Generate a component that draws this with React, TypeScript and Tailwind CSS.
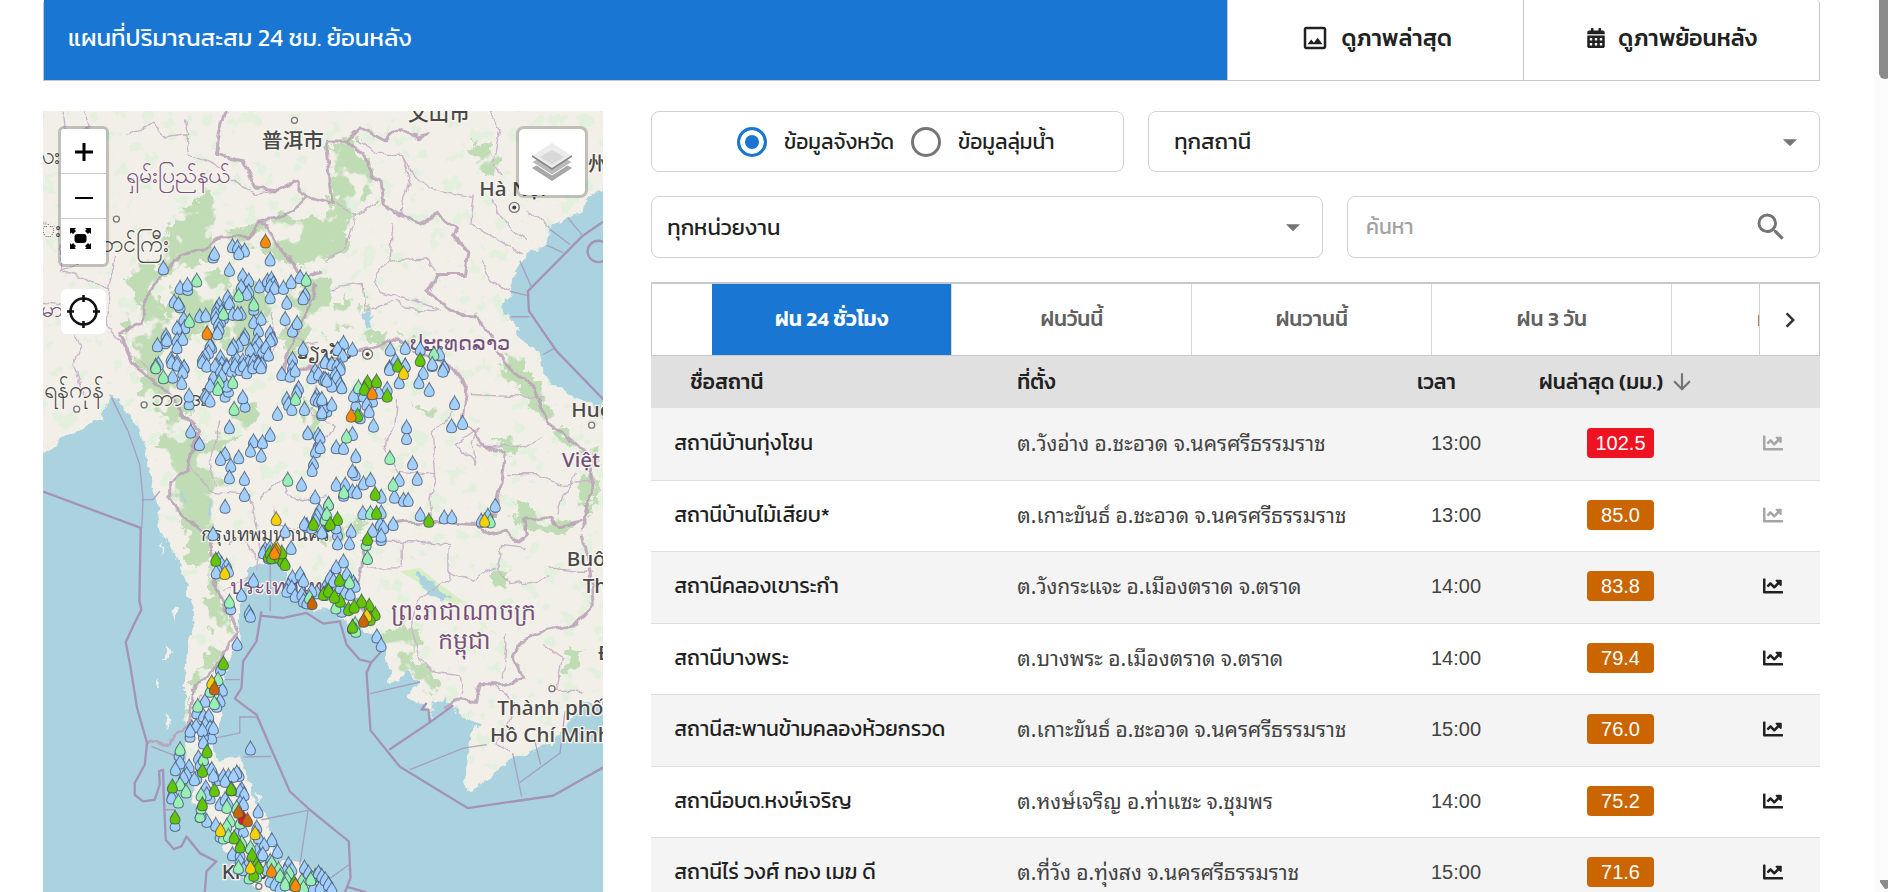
import React, { useState } from 'react';
import { FaCalendarAlt, FaChartLine } from 'react-icons/fa';
import { MdArrowDownward, MdArrowDropDown, MdKeyboardArrowRight, MdOutlineImage, MdSearch } from 'react-icons/md';

interface Station {
  name: string;
  location: string;
  time: string;
  rain: string;
  level: 'red' | 'brown';
  hasChart: boolean;
}

const stations: Station[] = [
  { name: 'สถานีบ้านทุ่งโชน', location: 'ต.วังอ่าง อ.ชะอวด จ.นครศรีธรรมราช', time: '13:00', rain: '102.5', level: 'red', hasChart: false },
  { name: 'สถานีบ้านไม้เสียบ*', location: 'ต.เกาะขันธ์ อ.ชะอวด จ.นครศรีธรรมราช', time: '13:00', rain: '85.0', level: 'brown', hasChart: false },
  { name: 'สถานีคลองเขาระกำ', location: 'ต.วังกระแจะ อ.เมืองตราด จ.ตราด', time: '14:00', rain: '83.8', level: 'brown', hasChart: true },
  { name: 'สถานีบางพระ', location: 'ต.บางพระ อ.เมืองตราด จ.ตราด', time: '14:00', rain: '79.4', level: 'brown', hasChart: true },
  { name: 'สถานีสะพานข้ามคลองห้วยกรวด', location: 'ต.เกาะขันธ์ อ.ชะอวด จ.นครศรีธรรมราช', time: '15:00', rain: '76.0', level: 'brown', hasChart: true },
  { name: 'สถานีอบต.หงษ์เจริญ', location: 'ต.หงษ์เจริญ อ.ท่าแซะ จ.ชุมพร', time: '14:00', rain: '75.2', level: 'brown', hasChart: true },
  { name: 'สถานีไร่ วงศ์ ทอง เมฆ ดี', location: 'ต.ที่วัง อ.ทุ่งสง จ.นครศรีธรรมราช', time: '15:00', rain: '71.6', level: 'brown', hasChart: true },
];

const tabs = ['ฝน 24 ชั่วโมง', 'ฝนวันนี้', 'ฝนวานนี้', 'ฝน 3 วัน', 'ฝน 7 วัน'];

const levelColors = {
  red: 'bg-[#ef1220]',
  brown: 'bg-[#ca6500]',
};

// Rain gauges per map tile, "x,y" pairs grouped by marker colour
interface Tile {
  x: number;
  y: number;
  drops: [string, string][];
}

const BLUE = '#a3cfff';
const MINT = '#9af0b4';
const GREEN = '#63c600';
const YELLOW = '#f7d100';
const ORANGE = '#ff8a00';
const BROWN = '#ca6500';
const RED = '#ef1220';

const tiles: Tile[] = [
  {
    x: -9,
    y: -33,
    drops: [
      [BLUE, '577,437 592,440 613,450 596,458 519,468 523,460 370,503 568,508 690,477 420,562 443,565 442,553 402,603 420,617 415,610 431,655 434,680 479,647 497,645 411,682 378,705 375,725 380,718 352,734 411,718 428,715 411,740 608,525 626,540 603,558 626,572 620,580 658,558 682,540 694,535 700,548 690,557 703,562 690,590 730,562 753,545 780,530 795,582 789,593 740,607 735,655 757,690 771,667'],
      [BLUE, '563,590 568,608 537,612 530,625 545,632 527,640 550,650 528,655 541,662 535,670 537,685 532,698 578,640 603,640 593,640 641,625 641,665 663,655 655,690 690,697 697,715 690,720 614,705 611,715 595,735 580,735 575,745 650,720 657,730 645,745 630,748 665,755 677,740 685,762 515,740 510,735 505,755 495,765 487,775 541,770 545,790 530,795 560,795 575,790 590,775 608,780 625,785 640,780 655,785 665,790 393,775 411,783 355,790 432,800 789,745 757,775 857,783'],
      [MINT, '470,540 448,662 596,585 550,640 641,612 798,538 347,795'],
      [ORANGE, '676,423 501,698'],
    ],
  },
  {
    x: 831,
    y: -33,
    drops: [
      [BLUE, '70,727 97,747 52,745 68,765 15,783 35,790 60,795 210,747 255,742 300,745 358,760 226,780 208,800 255,795 336,793 372,800'],
      [MINT, '341,760'],
      [GREEN, '300,778'],
    ],
  },
  {
    x: -9,
    y: 747,
    drops: [
      [BLUE, '395,5 411,12 432,20 428,35 398,48 425,67 487,5 500,15 520,50 510,75 495,105 500,110 510,120 525,15 541,30 560,20 575,30 585,15 600,25 610,15 620,35 638,20 655,10 663,20 447,128 447,105 615,135 608,110 555,105 565,90 560,75 545,45 725,40 757,20 750,45 765,30 775,82 770,95 740,115 745,130 755,145 712,160 793,145 825,30 815,50 835,40 850,55 865,60 857,5 830,105 825,115 835,120 850,130 860,150 845,160'],
      [BLUE, '452,213 478,250 568,200 690,223 640,242 631,270 667,245 663,285 555,280 541,295 596,290 572,315 568,350 613,355 613,403 555,438 803,218 834,222 834,252 826,272 820,308 816,328 784,372 825,410 519,520 735,512 753,562 837,450 830,465 825,480 800,495 793,490 815,500 847,515 640,660 604,703 627,755 631,765 535,595 545,610 535,630 560,615 565,630 528,635 572,742 675,565 670,575 685,590 690,560 700,575 757,650 780,640 790,660 745,675 740,690 755,680 765,705 785,700 790,720 800,725 830,695 815,690 860,670'],
      [MINT, '347,20 370,50 537,65 533,85 578,65 582,145 766,115 743,357 865,430 855,470 568,723 808,710'],
      [GREEN, '820,490 527,597 685,585 690,575 695,590 718,590 728,600 735,610 725,575 860,690 868,490'],
      [YELLOW, '708,475 554,637 708,560'],
      [ORANGE, '707,570 703,577'],
      [BROWN, '816,727'],
    ],
  },
  {
    x: 831,
    y: 747,
    drops: [
      [BLUE, '15,5 35,10 50,15 60,25 45,40 15,55 50,50 60,70 35,75 65,80 20,60 5,120 10,140 35,132 5,155 5,115 208,25 255,15 237,65 309,37 296,65 336,10 372,20 368,30 327,88 403,128 394,197 427,187 201,85 107,132 110,105 130,105 157,120 175,95 140,130 147,152 120,170 100,105 160,195 259,232 259,200 97,220 48,260 70,262 0,230 0,260 107,287 105,340 97,332'],
      [BLUE, '48,372 75,372 70,402 97,392 110,395 130,368 151,358 237,358 277,308 291,355 223,408 183,408 250,418 264,418 300,462 372,470 395,470 219,490 128,457 183,455 525,435 483,480 503,465 180,490 190,500 157,510 183,535 183,525 93,512 52,520 52,548 88,548 5,515 48,500 70,602 48,620 30,650 80,640 40,660 60,680 100,665 105,675 75,695 15,700 90,700 70,740 65,750'],
      [MINT, '115,80 79,228 209,292 71,395 219,372 25,430 15,475 20,460 151,457 138,550 142,592 88,665 47,740 510,482 105,790'],
      [GREEN, '232,15 142,65 133,85 169,62 201,105 112,165 165,400 169,457 52,475 30,490 326,480 142,535 58,658 10,700 25,690 60,720 43,708 147,735 124,722 85,745 102,738 165,760 150,775 97,800'],
      [YELLOW, '250,37 493,480 140,765'],
      [ORANGE, '156,98 93,165'],
      [BROWN, '130,780'],
    ],
  },
  {
    x: -9,
    y: 1527,
    drops: [
      [BLUE, '591,70 541,145 547,207 495,240 540,240 530,255 470,275 490,285 506,285 495,310 455,320 450,345 468,315 450,330 510,320 515,350 520,322 490,345 487,328 490,365 417,400 420,425 406,445 447,437 440,460 430,470 475,410 480,430 470,470 463,475 500,440 515,445 530,475 520,465 550,465 565,465 555,480 597,462 590,455 580,465 605,505 600,510 612,520 398,520 395,530 497,500 510,530 500,520 540,550 555,535 565,550 600,545 610,550 654,572 631,383'],
      [BLUE, '405,612 500,600 527,612 480,585 540,645 590,640 610,630 650,620 655,650 695,658 672,672 712,693 577,700 600,700 650,690 660,705 668,700 640,720 600,720 620,735 610,745 690,720 680,745 690,780 705,790 745,730 735,750 755,745 793,740 805,755 838,760 850,780 855,800 820,800 865,790 840,800 760,790 720,800'],
      [MINT, '510,210 534,175 523,247 473,255 420,385 420,490 438,512 415,542 490,415 483,580 480,585 483,560 483,522 590,560 560,558 570,600 560,615 550,650 565,645 600,605 605,665 631,680 595,740 627,770 650,765 695,725 715,745 720,765 747,755 740,775 735,790 785,780 825,765 815,770 812,775 790,800 575,505'],
      [GREEN, '550,128 501,392 487,450 397,497 523,508 573,505 487,550 405,590 582,650 600,677 636,703 650,730 655,740 641,762 762,785'],
      [YELLOW, '515,185 541,628 645,637 631,740'],
      [RED, '610,592'],
      [BROWN, '523,203 595,573 622,598'],
      [ORANGE, '694,750 766,793'],
    ],
  },
  {
    x: 831,
    y: 1527,
    drops: [
      [BLUE, '170,47 183,73 -5,755 5,765 15,775 25,790 35,805'],
      [MINT, '107,30'],
      [GREEN, '97,18'],
    ],
  },
];

const RainDrops: React.FC = () => (
  <g stroke="#3c5066" strokeWidth="3" strokeOpacity="0.75">
    {tiles.map((tile) => (
      <g key={`${tile.x}-${tile.y}`} transform={`translate(${tile.x} ${tile.y})`}>
        {tile.drops.map(([color, points], i) => (
          <g key={i} fill={color}>
            {points.split(' ').map((p, j) => (
              <path key={j} transform={`translate(${p.replace(',', ' ')})`} d="M0 -21 C4 -11 15 -1 15 8 C15 17 8 21 0 21 C-8 21 -15 17 -15 8 C-15 -1 -4 -11 0 -21Z" />
            ))}
          </g>
        ))}
      </g>
    ))}
  </g>
);

const MapDrawing: React.FC = () => (
  <svg className="block h-full w-full" viewBox="0 0 1680 2343" preserveAspectRatio="xMinYMin slice" role="img" aria-label="แผนที่ฝน">
    <defs>
      <filter id="rough" x="-5%" y="-5%" width="110%" height="110%">
        <feTurbulence type="fractalNoise" baseFrequency="0.03" numOctaves="3" seed="4" result="n" />
        <feDisplacementMap in="SourceGraphic" in2="n" scale="34" xChannelSelector="R" yChannelSelector="G" />
      </filter>
      <filter id="wiggle" x="-5%" y="-5%" width="110%" height="110%">
        <feTurbulence type="fractalNoise" baseFrequency="0.02" numOctaves="3" seed="9" result="n" />
        <feDisplacementMap in="SourceGraphic" in2="n" scale="28" xChannelSelector="R" yChannelSelector="G" />
      </filter>
      {/* ragged edges plus clearings inside the forest */}
      <filter id="forest" x="-5%" y="-5%" width="110%" height="110%">
        <feTurbulence type="fractalNoise" baseFrequency="0.03" numOctaves="4" seed="4" result="n" />
        <feDisplacementMap in="SourceGraphic" in2="n" scale="70" xChannelSelector="R" yChannelSelector="G" result="edge" />
        <feTurbulence type="fractalNoise" baseFrequency="0.012" numOctaves="4" seed="13" />
        <feColorMatrix values="0 0 0 0 0  0 0 0 0 0  0 0 0 0 0  14 0 0 0 -5.6" result="holes" />
        <feComposite in="edge" in2="holes" operator="in" />
      </filter>
      <filter id="specks" x="0" y="0" width="100%" height="100%">
        <feTurbulence type="fractalNoise" baseFrequency="0.02" numOctaves="4" seed="21" />
        <feColorMatrix values="0 0 0 0 0.77  0 0 0 0 0.87  0 0 0 0 0.72  18 0 0 0 -11" />
      </filter>
    </defs>
    <rect width="1680" height="2343" fill="#f2efe9" />
    <rect width="1680" height="2343" filter="url(#specks)" />

    {/* forest */}
    <g fill="#c0dcb5" filter="url(#forest)">
      <path d="M366 367 L420 290 L516 230 L520 350 L560 355 L640 345 L700 315 L860 320 L870 210 L850 120 L880 80 L920 85 L985 170 L1000 230 L950 290 L945 370 L905 330 L910 420 L840 450 L780 460 L690 450 L640 400 L560 400 L500 440 L440 470 L350 500 L335 560 L390 620 L360 700 L330 760 L370 800 L430 880 L470 1000 L560 940 L590 890 L660 870 L640 930 L560 990 L530 1070 L550 1150 L510 1220 L500 1330 L540 1370 L520 1450 L570 1560 L520 1660 L450 1740 L440 1840 L425 1830 L450 1700 L520 1600 L490 1500 L500 1370 L430 1360 L420 1310 L440 1270 L390 1200 L370 1100 L340 1010 L370 950 L300 850 L290 780 L280 720 L230 640 L290 560 L250 510 L290 460 L360 460 Z" />
      <path d="M560 560 L620 500 L680 580 L640 700 L560 720 L480 700Z M720 560 L790 490 L860 500 L850 590 L790 680 L760 760 L720 740Z M400 520 L520 480 L560 520 L520 640 L420 700 L380 600Z M845 320 L910 330 L890 430 L840 460Z M840 520 L870 600 L840 680Z M1390 710 L1450 760 L1500 850 L1540 930 L1600 990 L1660 1010 L1660 1060 L1580 1010 L1500 940 L1440 850 L1370 790Z M1420 1170 L1480 1190 L1540 1220 L1620 1240 L1680 1130 L1640 1090 L1600 1120 L1640 1220 L1560 1270 L1460 1250 L1410 1230Z M1020 1560 L1090 1540 L1140 1590 L1120 1640 L1170 1690 L1170 1760 L1100 1690 L1050 1700 L1040 1650Z M780 870 L830 900 L820 980 L790 960Z M1340 1390 L1390 1380 L1400 1430 L1360 1440Z M1570 1630 L1620 1610 L1610 1680 L1560 1680Z" />
      <path d="M1290 100 L1340 90 L1370 150 L1340 200 L1300 160Z M960 660 L1060 650 L1110 700 L1020 720Z M1250 590 L1310 610 L1270 630Z M910 560 L980 580 L920 650 L850 640Z M1350 980 L1450 1000 L1400 1030Z M1100 870 L1200 900 L1250 960 L1170 920Z M840 1240 L980 1230 L900 1280 L820 1300Z" />
    </g>
    <path d="M1070 1380 L1130 1370 L1190 1420 L1260 1470 L1240 1480 L1160 1450 L1120 1410Z" fill="#d7edc3" />

    {/* sea */}
    <g fill="#aad3df" filter="url(#rough)">
      <path d="M-40 1047 L41 1007 L51 987 L121 952 L151 932 L176 912 L196 877 L206 847 L231 867 L261 917 L291 962 L311 1027 L326 1117 L341 1177 L356 1247 L376 1307 L401 1337 L421 1397 L441 1467 L446 1547 L431 1617 L426 1717 L426 1857 L431 1927 L421 1967 L456 2007 L446 2067 L481 2117 L511 2147 L551 2217 L581 2257 L631 2317 L690 2400 L-40 2400Z" />
      <path d="M611 1387 L631 1362 L691 1357 L726 1367 L731 1407 L741 1447 L781 1487 L861 1500 L891 1517 L921 1547 L981 1567 L1016 1617 L1036 1657 L1041 1712 L1071 1707 L1091 1677 L1121 1707 L1096 1757 L1131 1777 L1211 1767 L1241 1807 L1271 1817 L1306 1837 L1281 1867 L1276 1947 L1261 2027 L1281 2037 L1331 2017 L1361 1977 L1401 1947 L1461 1922 L1471 1902 L1531 1897 L1571 1837 L1621 1777 L1720 1742 L1720 2400 L876 2400 L861 2317 L831 2277 L791 2267 L701 2247 L681 2187 L671 2127 L651 2087 L631 2057 L611 2007 L591 1932 L561 1937 L521 1947 L511 1897 L521 1867 L536 1797 L536 1727 L551 1667 L571 1617 L591 1567 L581 1507Z" />
      <path d="M1720 207 L1631 257 L1621 297 L1571 317 L1521 347 L1511 402 L1471 417 L1431 447 L1411 497 L1401 547 L1383 587 L1401 627 L1431 677 L1481 717 L1496 767 L1521 807 L1571 847 L1621 867 L1720 967Z" />
      <path d="M1120 1390 L1150 1395 L1180 1430 L1220 1460 L1200 1468 L1150 1440Z M960 610 L975 600 L985 650 L970 650Z M415 1130 L425 1130 L430 1180 L420 1180Z M492 1160 L502 1170 L505 1220 L495 1215Z" />
    </g>
    <g fill="#f2efe9" filter="url(#rough)">
      <path d="M350 1310 L358 1300 L355 1330Z M395 1480 L410 1490 L395 1520 L385 1500Z M370 1590 L380 1630 L365 1640Z M375 1800 L385 1830 L370 1850Z M345 1700 L355 1720 L345 1740Z M1150 1780 L1165 1770 L1165 1820Z M638 2040 L655 2050 L650 2070Z" />
    </g>

    {/* province lines */}
    <g fill="none" stroke="#c9b3c9" strokeWidth="4" filter="url(#wiggle)">
      <path d="M60 0 L70 70 L140 50 L120 0 M250 70 L330 40 L370 80 L440 70 L430 20 M430 70 L440 130 L500 150 L560 200 L640 250 L700 240 L750 220 M130 360 L110 460 L60 480 L200 530 L220 440 M200 530 L190 640 L240 700 M0 340 L50 350 L60 480 M0 570 L60 580 L110 700 L90 760 L120 850" />
      <path d="M940 90 L1000 130 L1080 130 L1120 210 L1200 240 L1290 260 M1080 130 L1100 200 L1070 310 M870 270 L940 310 L1010 270 M940 310 L910 400 L850 450 M1050 330 L1040 450 L990 510 L1010 540 L1120 570 L1190 600 M1040 450 L1150 440 L1180 480 M1340 0 L1370 50 L1350 150 L1380 190 M1290 250 L1280 340 L1340 370 L1440 430 M1340 270 L1390 340 L1450 390 M1450 300 L1520 350 M1310 450 L1340 510 L1400 540" />
      <path d="M870 530 L960 520 L970 600 L1060 570 L1080 590 L1180 600 M530 930 L500 1050 L520 1120 M430 1050 L500 1140 L620 1150 L650 1280 L640 1380 M650 1160 L720 1100 L730 1150 L760 1170 L850 1150 M850 980 L870 940 L800 900 L830 800 M1060 860 L1050 960 L1020 1000 L1060 1080 L1180 1090 L1170 960 L1230 900 M1180 1090 L1160 1160 L1170 1240 M1240 1000 L1300 1060 L1280 1000 L1310 950 L1250 990Z M1280 850 L1500 860 M1300 1000 L1440 1010 L1500 980" />
      <path d="M950 1290 L1080 1290 L1080 1370 L970 1370 M1080 1290 L1220 1300 L1220 1400 L1120 1470 L1110 1560 M1220 1380 L1290 1410 L1360 1370 L1380 1300 L1450 1310 M1360 1370 L1400 1420 L1520 1400 M1520 1370 L1600 1380 L1650 1380 M1390 1090 L1480 1090 L1550 1120 L1640 1110 M1540 1210 L1560 1150 L1600 1080 M1110 1560 L1130 1640 L1170 1680 L1250 1690 L1260 1750 M1390 1570 L1380 1700 M1500 1600 L1560 1640 L1540 1740 L1620 1740 M1350 1720 L1420 1780 L1360 1900 L1400 1920" />
      <path d="M440 1800 L480 1750 M540 1440 L610 1400 L640 1410 M560 1300 L600 1280 L640 1340 M290 750 L360 800 M680 600 L700 700 L640 780 M720 640 L780 700 L830 690 M690 1180 L700 1240 L760 1260 L800 1220" />
    </g>

    {/* national borders */}
    <g fill="none" stroke="#b9a0b6" strokeWidth="9" strokeOpacity="0.85" strokeLinejoin="round" filter="url(#wiggle)">
      <path d="M550 0 L530 60 L520 130 L600 150 L640 230 L700 240 L760 210 L790 260 L870 280 L860 200 L850 90 L910 90 L950 50 L1030 90 L1070 50 L1120 80 L1160 70 M910 90 L960 130 L990 200 L1010 210 L1020 280 L1080 320 L1130 340 L1180 310 L1240 350 L1230 380 L1280 420 L1270 490 L1180 490 L1150 540 L1220 600 L1300 620 L1330 660 L1380 750 L1470 830 L1510 930 L1600 1000 L1650 1050 L1640 1150 L1620 1260" />
      <path d="M790 260 L750 300 L700 320 L650 330 L620 380 L540 380 L490 410 L390 450 L350 500 L310 560 L300 640 L230 660 L270 760 L360 830 L420 910 L470 960 L450 1000 L430 1080 L380 1110 L380 1160 L430 1220 L500 1290 L520 1360 L510 1420 L550 1500 L580 1560 L530 1650 L450 1740 L430 1840 L370 1900 L320 1890" />
      <path d="M650 330 L700 400 L740 440 L770 500 L840 480 M820 520 L790 600 L730 740 L720 800 L790 770 L880 730 L1000 710 L1060 680 L1120 720 L1240 770 L1270 840 L1260 930 L1310 990 L1380 1030 L1370 1120 L1350 1220 L1300 1240 L1100 1230 L1000 1250 L960 1300 L960 1370 L930 1450 L980 1530" />
      <path d="M1300 1240 L1340 1270 L1390 1260 L1420 1290 L1450 1270 L1440 1220 L1520 1220 L1550 1250 L1620 1230 M1620 1270 L1640 1380 L1650 1480 L1600 1540 L1500 1560 L1420 1600 L1410 1640 L1440 1700 L1370 1720 L1310 1720 L1300 1770 L1240 1770 L1200 1790" />
    </g>

    {/* maritime lines */}
    <g fill="none" stroke="#a593b5" strokeWidth="7" strokeLinejoin="round">
      <path d="M0 1141 L293 1250 L289 1470 L295 1495 L270 1545 L248 1593 L262 1665 L282 1790 L312 1895 L305 1960 L275 2015 L275 2050 L300 2070 L335 2065 L350 2020 L348 1980 L360 1975 L362 2050 L368 2185 L392 2213 L415 2205 L430 2175 L470 2225 L520 2250 L490 2280 L485 2343" />
      <path d="M655 1500 L640 1590 L600 1650 L595 1730 L575 1762 L640 1810 L670 1880 L740 2040 L800 2095 L861 2145 L917 2190 L922 2300 L905 2343 M915 2327 L970 2343" />
      <path d="M650 1513 L720 1520 L790 1505 L840 1537 L890 1530 L910 1600 L950 1645 L985 1653 L1015 1620 M985 1650 L970 1685 L982 1857 L1069 1965 L1273 2090 L1529 2053 L1680 1968 M1038 1915 L1160 1833 L1155 1795 L1135 1795 L1150 1775 M1160 1833 L1230 1782" />
      <path d="M1680 332 L1617 375 L1454 540 L1457 600 L1540 720 L1680 865" />
      <circle cx="1665" cy="421" r="32" />
    </g>
    <g fill="none" stroke="#a593b5" strokeWidth="4" strokeOpacity="0.8">
      <path d="M206 860 L255 960 L290 1060 L300 1165 L296 1250 M981 1747 L1130 1712 M1100 1975 L1260 1910 L1330 1900 M1408 1925 L1435 2055 M1430 2013 L1550 1925 L1565 1800 M1475 1890 L1492 1960 M1430 450 L1463 525 M1400 540 L1450 553 M1402 617 L1457 617 M1520 355 L1580 400 M1510 402 L1560 425 M1575 322 L1615 370 M1500 730 L1535 710 M515 1880 L590 1865 L590 1817 L640 1817 M600 1937 L685 1935 M655 2125 L795 2097 L770 2260 M545 1705 L590 1705 M325 1905 L400 1935 M365 2095 L395 2095 M862 2300 L917 2260 M296 1165 L330 1165 L350 1140 M681 1357 L681 1500" />
    </g>

    {/* places */}
    <g fill="#f6f4f0" stroke="#777" strokeWidth="4">
      <circle cx="754" cy="28" r="9" />
      <circle cx="220" cy="324" r="9" />
      <circle cx="101" cy="894" r="9" />
      <circle cx="303" cy="881" r="9" />
      <circle cx="973" cy="729" r="15" />
      <circle cx="1413" cy="289" r="15" />
      <circle cx="1645" cy="942" r="9" />
      <circle cx="1526" cy="1732" r="9" />
      <circle cx="647" cy="2325" r="9" />
    </g>
    <g fill="#444">
      <circle cx="973" cy="729" r="6" />
      <circle cx="1413" cy="289" r="6" />
    </g>
    <g fill="#484848" stroke="#f7f4ee" strokeWidth="8" paintOrder="stroke" fontFamily="'Noto Sans', 'Noto Sans CJK SC', sans-serif" fontSize="62" fontWeight="500">
      <text x="656" y="112">普洱市</text>
      <text x="1094" y="30">文山市</text>
      <text x="1634" y="180">州</text>
      <text x="1308" y="254">Hà Nội</text>
      <text x="-30" y="160" fontSize="70">လး</text>
      <text x="106" y="424" fontSize="70">တောင်ကြီး</text>
      <text x="2" y="860" fontSize="70">ရန်ကုန်</text>
      <text x="325" y="885" fontSize="70">ဘားအံ</text>
      <text x="-6" y="378" fontSize="70">း</text>
      <text x="762" y="744" fontSize="54">ວຽງຈັນ</text>
      <text x="474" y="1288" fontSize="56">กรุงเทพมหานคร</text>
      <text x="1584" y="918">Huế</text>
      <text x="1570" y="1364">Buôn Ma</text>
      <text x="1618" y="1444">Thuột</text>
      <text x="1664" y="1646">Đà</text>
      <text x="1362" y="1812">Thành phố</text>
      <text x="1340" y="1892">Hồ Chí Minh</text>
      <text x="536" y="2302">Krabi</text>
    </g>
    <g fill="#75507b" stroke="#f7f4ee" strokeWidth="8" paintOrder="stroke" fontFamily="'Noto Sans', sans-serif" fontSize="62" fontWeight="500">
      <text x="248" y="216" fontSize="69">ရှမ်းပြည်နယ်</text>
      <text x="-90" y="618" fontSize="69">မြန်မာ</text>
      <text x="1100" y="718">ປະເທດລາວ</text>
      <text x="560" y="1448">ประเทศไทย</text>
      <text x="1556" y="1066">Việt Nam</text>
      <text x="1044" y="1526" fontSize="71">ព្រះរាជាណាចក្រ</text>
      <text x="1184" y="1612" fontSize="71">កម្ពុជា</text>
    </g>

    <RainDrops />
  </svg>
);

const RainMap: React.FC = () => (
  <section className="relative h-full overflow-hidden bg-[#aad3df]">
    <MapDrawing />
    <div className="absolute left-[15px] top-[15px] overflow-hidden rounded-md border-[3px] border-black/20 bg-white bg-clip-padding">
      <button aria-label="Zoom in" className="flex h-[45px] w-[45px] items-center justify-center border-b border-[#ccc] pt-0.5">
        <svg width="18" height="18" viewBox="0 0 18 18" stroke="#000" strokeWidth="3"><path d="M9 0v18M0 9h18" /></svg>
      </button>
      <button aria-label="Zoom out" className="flex h-[45px] w-[45px] items-center justify-center border-b border-[#ccc] pt-0.5">
        <svg width="18" height="18" viewBox="0 0 18 18" stroke="#000" strokeWidth="2"><path d="M0 10h18" /></svg>
      </button>
      <button aria-label="Full screen" className="flex h-[45px] w-[45px] items-start justify-start pl-[9px] pt-[9px]">
        <svg width="21" height="21" viewBox="0 0 21 21">
          <path d="M0 0h6L4.5 1.5 6 3 3 6 1.5 4.5 0 6zM21 0h-6l1.5 1.5L15 3l3 3 1.5-1.5L21 6zM0 21h6l-1.5-1.5L6 18l-3-3-1.5 1.5L0 15zM21 21h-6l1.5-1.5L15 18l3-3 1.5 1.500L21 15z" />
          <rect x="4.5" y="6" width="12" height="9" rx="3" />
        </svg>
      </button>
    </div>
    <button aria-label="Locate" className="absolute left-[18px] top-[178px] flex h-[45px] w-[45px] items-center justify-center rounded-md bg-white">
      <svg width="33" height="33" viewBox="0 0 33 33" fill="none" stroke="#111" strokeWidth="2.6">
        <circle cx="16.5" cy="16.5" r="13" />
        <path d="M16.5 0v7M16.5 26v7M0 16.5h7M26 16.5h7" />
      </svg>
    </button>
    <button aria-label="Layers" className="absolute right-[15px] top-[15px] flex h-[72px] w-[72px] items-center justify-center rounded-lg border-[3px] border-black/20 bg-white bg-clip-padding">
      <svg width="40" height="40" viewBox="0 0 40 40">
        <path d="M0 26 L20 39 L40 26 L20 14Z" fill="#a8a8a8" />
        <path d="M0 20 L20 33 L40 20 L20 8Z" fill="#b9b9b9" stroke="#fff" strokeWidth="1" />
        <path d="M0 14 L20 27 L40 14 L20 1Z" fill="#ececec" />
        <path d="M8 15 L20 8 L32 15 L20 23Z" fill="#d8d8d8" />
        <path d="M0 14 L20 27 L40 14" fill="none" stroke="#888" strokeWidth="1.5" />
      </svg>
    </button>
  </section>
);

const App: React.FC = () => {
  const [activeTab, setActiveTab] = useState(0);
  const [source, setSource] = useState('province');

  return (
    <div className="relative flex h-screen flex-col overflow-hidden bg-white pl-[43px] pr-[68px] font-['Kanit','Noto_Sans_Thai','Noto_Sans','Liberation_Sans',sans-serif] text-[22px] text-[#212121]">
      <header className="grid h-[81px] shrink-0 grid-cols-6 rounded-t-sm border-x border-b border-[#c8c8c8] text-2xl">
        <h1 className="col-span-4 flex items-center bg-[#1976d2] pb-1 pl-6 text-white">แผนที่ปริมาณสะสม 24 ชม. ย้อนหลัง</h1>
        <button className="flex items-center justify-center gap-3 border-l border-[#c8c8c8] pb-1 text-[23px] font-medium">
          <MdOutlineImage size={30} />
          ดูภาพล่าสุด
        </button>
        <button className="flex items-center justify-center gap-3 border-l border-[#c8c8c8] pb-1 text-[23px] font-medium">
          <FaCalendarAlt size={20} />
          ดูภาพย้อนหลัง
        </button>
      </header>

      <main className="mt-[30px] grid min-h-0 flex-1 grid-cols-3 gap-12">
        <RainMap />

        <section className="col-span-2 overflow-hidden">
          <div className="grid grid-cols-12 gap-6">
            <div className="col-span-5 flex h-[61px] items-center justify-center gap-[17px] rounded-lg border border-[#d0d0d8] pl-4 text-[21px]">
              <label className="flex items-center gap-[17px]">
                <input
                  type="radio"
                  name="source"
                  checked={source === 'province'}
                  onChange={() => setSource('province')}
                  className="h-[30px] w-[30px] appearance-none rounded-full border-[3px] border-[#757575] checked:border-[#1976d2] checked:bg-[#1976d2] checked:shadow-[inset_0_0_0_5px_#fff]"
                />
                ข้อมูลจังหวัด
              </label>
              <label className="flex items-center gap-[17px]">
                <input
                  type="radio"
                  name="source"
                  checked={source === 'basin'}
                  onChange={() => setSource('basin')}
                  className="h-[30px] w-[30px] appearance-none rounded-full border-[3px] border-[#757575] checked:border-[#1976d2] checked:bg-[#1976d2] checked:shadow-[inset_0_0_0_5px_#fff]"
                />
                ข้อมูลลุ่มน้ำ
              </label>
            </div>
            <div className="relative col-span-7">
              <select aria-label="สถานี" className="h-[61px] w-full appearance-none rounded-lg border border-[#d0d0d8] bg-white pl-[25px]">
                <option>ทุกสถานี</option>
              </select>
              <MdArrowDropDown size={34} className="pointer-events-none absolute right-[13px] top-3.5 text-[#757575]" />
            </div>
            <div className="relative col-span-7">
              <select aria-label="หน่วยงาน" className="h-[62px] w-full appearance-none rounded-lg border border-[#d0d0d8] bg-white pl-[15px]">
                <option>ทุกหน่วยงาน</option>
              </select>
              <MdArrowDropDown size={34} className="pointer-events-none absolute right-[13px] top-3.5 text-[#757575]" />
            </div>
            <div className="col-span-5 flex h-[62px] items-center rounded-lg border border-[#d0d0d8] pl-[18px] pr-[30px] text-[21px]">
              <input type="text" aria-label="ค้นหา" placeholder="ค้นหา" className="min-w-0 flex-1 outline-none placeholder:text-[#a2a2a2]" />
              <button aria-label="ค้นหา">
                <MdSearch size={36} className="text-[#757575]" />
              </button>
            </div>
          </div>

          <div className="mt-6 flex h-[74px] border border-t-2 border-[#c8c8c8] text-[21px] text-[#616161]">
            <div className="w-[60px] shrink-0" />
            <div className="flex min-w-0 flex-1 overflow-hidden" role="tablist">
              {tabs.map((tab, i) => (
                <button
                  key={tab}
                  role="tab"
                  aria-selected={activeTab === i}
                  onClick={() => setActiveTab(i)}
                  className={`w-[240px] shrink-0 border-r border-[#d8d8d8] pb-0.5 ${activeTab === i ? 'bg-[#1976d2] font-semibold text-white' : 'font-medium'}`}
                >
                  {tab}
                </button>
              ))}
            </div>
            <button aria-label="Next" className="flex w-[60px] shrink-0 items-center justify-center border-l border-[#d0d0d0] text-[#333]">
              <MdKeyboardArrowRight size={30} />
            </button>
          </div>

          <table className="w-full table-fixed text-left text-[21px]">
            <colgroup>
              <col className="w-[343px]" />
              <col />
              <col className="w-[122px]" />
              <col className="w-[209px]" />
              <col className="w-[95px]" />
            </colgroup>
            <thead>
              <tr className="h-[52px] bg-[#e0e0e0]">
                <th className="pl-[39px] font-medium">ชื่อสถานี</th>
                <th className="pl-[23px] font-medium">ที่ตั้ง</th>
                <th className="pl-[23px] font-medium">เวลา</th>
                <th className="pl-[23px] font-medium">
                  <span className="flex items-center gap-1.5 whitespace-nowrap">
                    ฝนล่าสุด (มม.)
                    <MdArrowDownward size={26} className="shrink-0 text-[#757575]" />
                  </span>
                </th>
                <th />
              </tr>
            </thead>
            <tbody>
              {stations.map((s) => (
                <tr key={s.name} className="border-b border-[#dedede] odd:h-[72px] odd:bg-[#f4f4f4] even:h-[71px]">
                  <td className="pb-0.5 pl-[23px]">{s.name}</td>
                  <td className="whitespace-nowrap pb-1 pl-[23px] font-['Noto_Sans_Thai_Looped','Loma','Noto_Sans',sans-serif] text-[21px] text-[#424242]">{s.location}</td>
                  <td className="pb-0.5 pl-[37px] font-['Liberation_Sans',sans-serif] text-xl text-[#424242]">{s.time}</td>
                  <td className="pb-0.5 text-center">
                    <span className={`inline-block w-[67px] rounded font-['Liberation_Sans',sans-serif] text-xl leading-[30px] text-white ${levelColors[s.level]}`}>{s.rain}</span>
                  </td>
                  <td className="pb-0.5">
                    <button aria-label="กราฟ" disabled={!s.hasChart} className="mx-auto block disabled:text-[#a6a6a6]">
                      <FaChartLine size={20} />
                    </button>
                  </td>
                </tr>
              ))}
            </tbody>
          </table>
        </section>
      </main>

      {/* page scrollbar */}
      <div className="absolute inset-y-0 right-0 w-3.5 overflow-hidden bg-[#fcfcfc]">
        <div className="ml-[5px] h-[79px] w-3 rounded-b-full bg-[#8b8b8b]" />
        <svg className="absolute bottom-[3px] left-1.5" width="12" height="9" viewBox="0 0 12 9" fill="#8b8b8b"><path d="M0 0h12v2L7 9H5L0 2z" /></svg>
      </div>
    </div>
  );
};

export default App;
